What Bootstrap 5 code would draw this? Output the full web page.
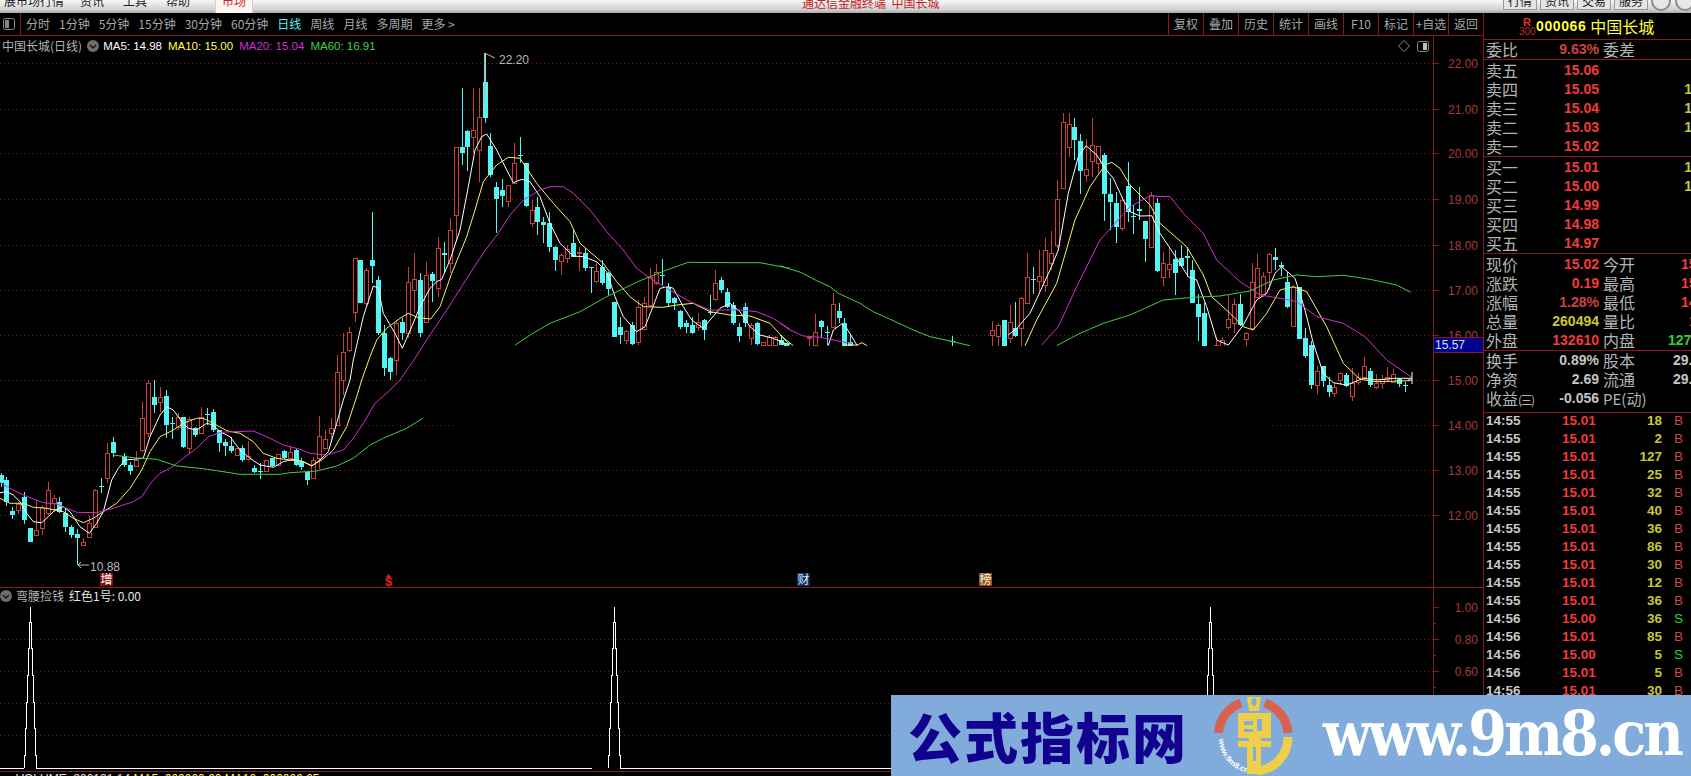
<!DOCTYPE html>
<html lang="zh-CN">
<head>
<meta charset="UTF-8">
<title>中国长城(日线)</title>
<link href="https://cdn.jsdelivr.net/npm/bootstrap@5.3.0/dist/css/bootstrap.min.css" rel="stylesheet">
<style>
html, body { background: #000; overflow: hidden; }
body { font-family: "Noto Sans CJK SC", "Liberation Sans", sans-serif; color: #b4b4b4; }
.tdx-app { width: 1691px; height: 776px; position: relative; overflow: hidden; background: #000; }
.tdx-title { height: 13px; background: linear-gradient(#f8f8f8, #d0d0d0 75%, #a8a8a8); color: #222; font-size: 12px; line-height: 14px; }
.tdx-menu { margin-bottom: 5px; white-space: nowrap; flex: none; }
.tdx-menu-item { margin-left: 19px; }
.tdx-menu-item:first-child { margin-left: 4px; margin-right: -5px; width: 62px; }
.tdx-tab { height: 13px; margin-left: 25px; width: 38px; flex: none; text-align: center; background: #fbf6f6; border: solid #e2c8c8; border-width: 0 1px; color: #d02020; overflow: hidden; }
.tdx-tab span { display: block; margin-top: -6px; line-height: 14px; }
.tdx-center { color: #c02020; margin-bottom: 3px; margin-left: 549px; width: 196px; flex: none; font-size: 12px; white-space: nowrap; }
.tdx-winbtn { width: 34px; height: 10px; flex: none; margin-right: 3px; border: 1px solid #9a9a9a; border-top: 0; background: #e4e4e4; font-size: 12px; line-height: 2px; text-align: center; overflow: hidden; }
.tdx-round { width: 20px; height: 20px; margin-top: -9px; margin-right: 4px; border: 2px solid #8c8c8c; border-radius: 50%; background: #e6e6e6; flex: none; }
.tdx-round-last { margin-right: -4px; }
.tdx-chartcol { width: 1483px; flex: none; }
.tdx-toolbar { height: 23px; border-bottom: 1px solid #8a1620; font-size: 12px; line-height: 21px; color: #a8a8a8; }
.tdx-tool-left { padding-left: 3px; gap: 9px; }
.tdx-tool-left .tdx-active { color: #54f0f0; }
.tdx-toggle { width: 18px; border-right: 1px solid #8a1620; margin-right: -4px; height: 22px; display: flex; align-items: center; }
.tdx-tool-cell { width: 35px; text-align: center; border-left: 1px solid #8a1620; white-space: nowrap; }
.tdx-plot { height: 740px; position: relative; }
.tdx-plot svg.tdx-canvas { position: absolute; left: 0; top: 0; }
.tdx-legend { position: absolute; left: 2px; top: 2px; font-size: 12px; line-height: 16px; gap: 6px; white-space: nowrap; }
.tdx-legend .tdx-ma { font: 11.5px/16px "Liberation Sans", sans-serif; }
.tdx-legend svg { margin-left: -1px; margin-right: -2px; }
.tdx-side { width: 208px; flex: none; border-left: 1px solid #8a1620; overflow: hidden; height: 763px; }
.tdx-stock { height: 27px; border-bottom: 1px solid #8a1620; color: #ffff40; }
.tdx-rmark { width: 16px; margin-left: 35px; margin-right: 1px; text-align: center; color: #e03030; font: bold 11px/10px "Liberation Sans", sans-serif; }
.tdx-rmark div { font-weight: normal; color: #c03030; font-size: 10px; }
.tdx-code { font: bold 14px/26px "Liberation Sans", sans-serif; letter-spacing: .6px; margin-right: 4px; }
.tdx-name { font-size: 16px; line-height: 26px; }
.tdx-sec { border-bottom: 1px solid #8a1620; overflow: hidden; }
.tdx-sec-pad { padding-top: 1px; }
.tdx-q { height: 19px; line-height: 19px; padding-left: 2px; font-size: 16px; white-space: nowrap; color: #b4b4b4; }
.tdx-q .tdx-l1 { width: 34px; flex: none; }
.tdx-q .tdx-v1 { width: 79px; flex: none; text-align: right; }
.tdx-q .tdx-l2 { width: 78px; flex: none; margin-left: 4px; }
.tdx-q .tdx-l2-num { width: 89px; }
.tdx-q .tdx-l2-in { width: 65px; }
.tdx-q .tdx-l2-cap { width: 70px; }
.tdx-q .tdx-l2-pe { font-size: 15px; }
.tdx-paren { font-size: 12px; letter-spacing: -1.5px; }
.tdx-num { font: bold 14px/19px "Liberation Sans", sans-serif; }
.tdx-red { color: #f23b3b; }
.tdx-dimred { color: #cf4242; }
.tdx-yel { color: #c8c832; }
.tdx-grn { color: #2fd02f; }
.tdx-gry { color: #c4c4c4; }
#trades { margin-top: -1px; }
.tdx-trade { height: 18px; padding-left: 2px; font: bold 13.5px/18px "Liberation Sans", sans-serif; white-space: nowrap; }
.tdx-trade .tdx-t { width: 76px; flex: none; color: #c8c8c8; }
.tdx-trade .tdx-p { width: 50px; flex: none; }
.tdx-trade .tdx-c { width: 50px; flex: none; text-align: right; }
.tdx-trade .tdx-f { margin-left: 12px; font-weight: normal; }
.tdx-banner { position: absolute; left: 891px; top: 695px; width: 800px; height: 81px; background: #80abda; }
.tdx-banner-cn { margin-left: 17px; width: 306px; flex: none; font-size: 54px; line-height: 60px; font-weight: 900; color: #12008e; letter-spacing: 2px; white-space: nowrap; }
.tdx-banner-url { margin-left: 29px; font-family: "DejaVu Serif Condensed", "DejaVu Serif", serif; font-weight: bold; font-size: 62px; line-height: 62px; letter-spacing: -3px; color: #fff; white-space: nowrap; margin-top: -4px; }
</style>
</head>
<body>
<div class="tdx-app d-flex flex-column">
    <div class="tdx-title d-flex overflow-hidden">
        <div class="tdx-menu d-flex align-self-end">
            <span class="tdx-menu-item">展市场行情</span>
            <span class="tdx-menu-item">资讯</span>
            <span class="tdx-menu-item">工具</span>
            <span class="tdx-menu-item">帮助</span>
        </div>
        <div class="tdx-tab"><span>市场</span></div>
        <div class="tdx-center align-self-end">通达信金融终端&nbsp;&nbsp;中国长城</div>
        <div class="d-flex ms-auto">
            <div class="tdx-winbtn">行情</div>
            <div class="tdx-winbtn">资讯</div>
            <div class="tdx-winbtn">交易</div>
            <div class="tdx-winbtn">服务</div>
            <div class="tdx-round"></div>
            <div class="tdx-round tdx-round-last"></div>
        </div>
    </div>

    <div class="d-flex">
        <div class="tdx-chartcol">
            <div class="tdx-toolbar d-flex">
                <div class="tdx-tool-left d-flex">
                    <div class="tdx-toggle">
                        <svg width="12" height="12"><rect x=".5" y=".5" width="11" height="11" rx="2" fill="none" stroke="#8a8a8a"/><rect x="2" y="2" width="4" height="8" fill="#8a8a8a"/></svg>
                    </div>
                    <span>分时</span><span>1分钟</span><span>5分钟</span><span>15分钟</span><span>30分钟</span><span>60分钟</span>
                    <span class="tdx-active">日线</span><span>周线</span><span>月线</span><span>多周期</span><span>更多 &gt;</span>
                </div>
                <div class="d-flex ms-auto">
                    <div class="tdx-tool-cell">复权</div>
                    <div class="tdx-tool-cell">叠加</div>
                    <div class="tdx-tool-cell">历史</div>
                    <div class="tdx-tool-cell">统计</div>
                    <div class="tdx-tool-cell">画线</div>
                    <div class="tdx-tool-cell">F10</div>
                    <div class="tdx-tool-cell">标记</div>
                    <div class="tdx-tool-cell">+自选</div>
                    <div class="tdx-tool-cell">返回</div>
                </div>
            </div>
            <div class="tdx-plot">
                <svg class="tdx-canvas" id="kline" width="1483" height="740" viewBox="0 36 1483 740"></svg>
                <div class="tdx-legend d-flex align-items-center">
                    <span>中国长城(日线)</span>
                    <svg width="12" height="12"><circle cx="6" cy="6" r="6" fill="#6e6e6e"/><path d="M3 5l3 3 3-3" fill="none" stroke="#111" stroke-width="1.3"/></svg>
                    <span class="tdx-ma" style="color:#fff">MA5: 14.98</span>
                    <span class="tdx-ma" style="color:#ffff50">MA10: 15.00</span>
                    <span class="tdx-ma" style="color:#d030d0">MA20: 15.04</span>
                    <span class="tdx-ma" style="color:#40d040">MA60: 16.91</span>
                </div>
            </div>
        </div>

        <div class="tdx-side">
            <div class="tdx-stock d-flex">
                <div class="tdx-rmark pt-1">R<div>300</div></div>
                <span class="tdx-code">000066</span>
                <span class="tdx-name">中国长城</span>
            </div>
            <div class="tdx-sec">
                <div class="tdx-q d-flex"><span class="tdx-l1">委比</span><span class="tdx-v1 tdx-num tdx-dimred">9.63%</span><span class="tdx-l2">委差</span></div>
            </div>
            <div class="tdx-sec tdx-sec-pad">
                <div class="tdx-q d-flex"><span class="tdx-l1">卖五</span><span class="tdx-v1 tdx-num tdx-red">15.06</span></div>
                <div class="tdx-q d-flex"><span class="tdx-l1">卖四</span><span class="tdx-v1 tdx-num tdx-red">15.05</span><span class="tdx-l2 tdx-l2-num tdx-num tdx-yel text-end">1</span></div>
                <div class="tdx-q d-flex"><span class="tdx-l1">卖三</span><span class="tdx-v1 tdx-num tdx-red">15.04</span><span class="tdx-l2 tdx-l2-num tdx-num tdx-yel text-end">1</span></div>
                <div class="tdx-q d-flex"><span class="tdx-l1">卖二</span><span class="tdx-v1 tdx-num tdx-red">15.03</span><span class="tdx-l2 tdx-l2-num tdx-num tdx-yel text-end">1</span></div>
                <div class="tdx-q d-flex"><span class="tdx-l1">卖一</span><span class="tdx-v1 tdx-num tdx-red">15.02</span></div>
            </div>
            <div class="tdx-sec tdx-sec-pad">
                <div class="tdx-q d-flex"><span class="tdx-l1">买一</span><span class="tdx-v1 tdx-num tdx-red">15.01</span><span class="tdx-l2 tdx-l2-num tdx-num tdx-yel text-end">1</span></div>
                <div class="tdx-q d-flex"><span class="tdx-l1">买二</span><span class="tdx-v1 tdx-num tdx-red">15.00</span><span class="tdx-l2 tdx-l2-num tdx-num tdx-yel text-end">1</span></div>
                <div class="tdx-q d-flex"><span class="tdx-l1">买三</span><span class="tdx-v1 tdx-num tdx-red">14.99</span></div>
                <div class="tdx-q d-flex"><span class="tdx-l1">买四</span><span class="tdx-v1 tdx-num tdx-red">14.98</span></div>
                <div class="tdx-q d-flex"><span class="tdx-l1">买五</span><span class="tdx-v1 tdx-num tdx-red">14.97</span></div>
            </div>
            <div class="tdx-sec tdx-sec-pad">
                <div class="tdx-q d-flex"><span class="tdx-l1">现价</span><span class="tdx-v1 tdx-num tdx-red">15.02</span><span class="tdx-l2">今开</span><span class="tdx-num tdx-red">15</span></div>
                <div class="tdx-q d-flex"><span class="tdx-l1">涨跌</span><span class="tdx-v1 tdx-num tdx-red">0.19</span><span class="tdx-l2">最高</span><span class="tdx-num tdx-red">15</span></div>
                <div class="tdx-q d-flex"><span class="tdx-l1">涨幅</span><span class="tdx-v1 tdx-num tdx-dimred">1.28%</span><span class="tdx-l2">最低</span><span class="tdx-num tdx-red">14</span></div>
                <div class="tdx-q d-flex"><span class="tdx-l1">总量</span><span class="tdx-v1 tdx-num tdx-yel">260494</span><span class="tdx-l2">量比</span><span class="tdx-num tdx-red ps-2">1</span></div>
                <div class="tdx-q d-flex"><span class="tdx-l1">外盘</span><span class="tdx-v1 tdx-num tdx-red">132610</span><span class="tdx-l2 tdx-l2-in">内盘</span><span class="tdx-num tdx-grn">127</span></div>
            </div>
            <div class="tdx-sec pb-1">
                <div class="tdx-q d-flex"><span class="tdx-l1">换手</span><span class="tdx-v1 tdx-num tdx-gry">0.89%</span><span class="tdx-l2 tdx-l2-cap">股本</span><span class="tdx-num tdx-gry">29.</span></div>
                <div class="tdx-q d-flex"><span class="tdx-l1">净资</span><span class="tdx-v1 tdx-num tdx-gry">2.69</span><span class="tdx-l2 tdx-l2-cap">流通</span><span class="tdx-num tdx-gry">29.</span></div>
                <div class="tdx-q d-flex"><span class="tdx-l1">收益<span class="tdx-paren">(三)</span></span><span class="tdx-v1 tdx-num tdx-gry">-0.056</span><span class="tdx-l2 tdx-l2-pe">PE(动)</span></div>
            </div>
            <div id="trades"></div>
        </div>
    </div>

    <div class="tdx-banner d-flex align-items-center">
        <div class="tdx-banner-cn">公式指标网</div>
        <svg width="80" height="81" viewBox="0 0 80 81" class="flex-shrink-0">
            <defs><path id="logoArc" d="M5 44 A35 35 0 0 0 36 78"/></defs>
            <path d="M4.5 38 A34 34 0 0 1 27 8" fill="none" stroke="#d9614f" stroke-width="9"/>
            <path d="M51 8 A34 34 0 0 1 74 38" fill="none" stroke="#d9614f" stroke-width="9"/>
            <path d="M74 42 A34 34 0 0 1 44 76" fill="none" stroke="#efcf4a" stroke-width="9"/>
            <text font-size="8" font-weight="bold" fill="#fff" font-family="Liberation Sans, sans-serif"><textPath href="#logoArc">www.9m8.cn</textPath></text>
            <path d="M33 2h14l-2 14h-10z" fill="#efcf4a"/>
            <ellipse cx="40" cy="7" rx="2.5" ry="4" fill="#80abda"/>
            <path d="M24 18h33v34h-10v27h-14v-27h-9z" fill="#efcf4a"/>
            <path d="M30 26h9v4h-9zM43 24h5v12h-5zM30 34h9v3h-9zM24 43h11v3h-11zM47 43h10v3h-10zM39 52h3v14h-3z" fill="#80abda"/>
        </svg>
        <div class="tdx-banner-url">www.9m8.cn</div>
    </div>
</div>

<script src="https://cdn.jsdelivr.net/npm/bootstrap@5.3.0/dist/js/bootstrap.bundle.min.js"></script>
<script>
// traced from the chart, in crop pixels: x, bodyTop, bodyBottom, wickTop, wickBottom, colour
const candleCrops = [[0,380,[
[2,285,310,280,320,'c'],[19,300,365,290,378,'c'],[37,392,404,380,416,'c'],[55,372,390,365,403,'r'],[73,350,420,335,432,'c'],
[91,443,485,443,485,'c'],[109,450,465,360,465,'r'],[127,380,445,375,465,'r'],[145,330,400,307,405,'r'],[163,355,370,345,395,'r'],
[178,365,395,350,400,'c'],[196,400,440,385,455,'c'],[214,440,465,435,475,'c'],[232,462,475,448,555,'c'],[250,485,494,475,494,'r'],
[268,428,472,408,475,'r'],[286,330,440,328,440,'r'],[304,318,322,295,340,'c'],[322,220,295,190,310,'r'],[340,185,220,170,230,'c'],
[373,228,255,220,260,'c'],[391,255,272,245,285,'c'],[409,240,258,212,262,'r'],[427,115,210,65,215,'r'],[445,10,160,0,170,'r'],
[463,50,75,0,100,'c'],[481,50,65,22,95,'r'],[499,48,135,30,175,'c'],[517,130,132,110,178,'c'],[535,110,140,100,150,'r'],
[550,112,200,112,205,'c'],[568,118,205,112,220,'r'],[586,145,165,140,170,'c'],[604,110,160,82,162,'r'],[622,103,105,85,135,'c'],
[640,97,150,88,155,'c'],[658,150,190,150,215,'c'],[676,185,198,178,228,'c'],[694,198,212,170,218,'c'],[710,203,225,203,225,'r'],
[727,205,240,195,245,'c'],[745,228,238,183,240,'r'],[763,265,275,255,280,'c'],[781,272,273,248,298,'c'],[799,240,273,240,273,'r'],
[817,233,258,233,262,'c'],[835,222,255,222,258,'r'],[853,212,235,210,238,'c'],[871,215,235,198,238,'r'],[889,210,255,208,258,'c'],
[904,245,260,235,270,'c'],[922,275,300,272,315,'c'],[940,240,295,232,298,'r'],[958,168,235,108,268,'r'],[976,178,205,150,205,'r'],
[994,145,160,115,190,'r']]],
[340,40,[
[28,875,930,860,935,'r'],[46,655,815,655,845,'r'],[61,660,790,660,790,'c'],[79,690,790,685,800,'r'],
[97,660,678,515,730,'c'],[115,720,880,708,885,'c'],[187,845,880,835,900,'c'],[205,725,880,680,895,'r'],[223,718,750,640,820,'r'],
[239,720,880,700,890,'c'],[257,705,845,665,850,'r'],
[275,702,722,695,785,'c'],[293,625,745,590,770,'r'],[311,640,645,605,700,'c'],[329,570,670,535,700,'r'],[347,322,525,322,600,'r'],
[365,322,340,145,375,'c'],[382,272,320,270,392,'c'],[400,270,290,145,340,'r'],[416,230,330,145,425,'r'],[434,125,235,42,250,'c'],
[451,318,405,280,410,'c'],[469,440,478,425,580,'c'],[487,450,468,418,500,'c'],[505,435,482,435,500,'r'],[523,370,430,310,430,'r'],
[541,345,348,290,368,'c'],[559,370,498,370,500,'c'],[577,510,550,480,560,'r'],[592,502,545,472,585,'c'],[610,545,555,530,610,'c'],
[628,548,620,515,635,'c'],[646,620,660,618,692,'c'],[664,645,662,640,705,'r'],[682,628,655,615,668,'r'],[700,610,650,570,650,'c'],
[718,635,640,620,692,'r'],[736,640,684,625,692,'c'],[754,680,682,680,758,'c'],[769,692,722,665,728,'r'],[787,682,728,660,735,'c'],
[805,700,748,695,765,'c'],[823,785,890,785,892,'c'],[841,860,885,830,912,'c'],[859,872,900,870,912,'r'],[877,855,912,845,915,'c'],
[895,800,905,780,915,'r'],[913,790,868,770,870,'r'],[931,710,795,685,800,'r'],[947,695,730,672,735,'r'],[965,705,708,658,735,'c'],
[983,740,790,728,800,'c'],[1001,775,790,770,810,'c'],[1019,812,860,810,868,'c'],[1037,848,860,840,878,'c'],[1055,855,878,830,882,'c'],
[1073,845,860,820,872,'r'],[1091,840,870,838,900,'c'],[1109,815,818,765,825,'c'],[1124,730,778,690,782,'r'],[1142,720,750,710,760,'c'],
[1160,755,800,745,805,'c'],[1178,795,848,785,855,'c'],[1196,862,888,848,905,'c'],[1214,800,848,790,860,'c'],[1232,855,895,850,915,'r'],
[1250,848,912,845,915,'c'],[1268,905,916,905,916,'r'],[1286,890,916,885,916,'r'],[1304,890,916,888,916,'r'],[1322,900,916,885,916,'c'],[1340,910,916,905,916,'c']]],
[780,250,[
[17,280,287,280,287,'c'],[87,262,264,258,287,'r'],[105,245,285,192,287,'r'],[124,213,232,210,262,'c'],[141,245,247,228,285,'c'],
[159,163,232,130,235,'r'],[176,183,205,158,220,'c'],[193,220,287,205,287,'c'],[211,275,287,255,287,'c'],[515,272,274,258,287,'c'],
[637,240,252,212,287,'r'],[655,225,255,222,287,'r']]],
[980,90,[
[37,720,735,695,767,'r'],[55,705,738,700,767,'r'],[73,690,767,690,767,'c'],[91,697,745,645,760,'r'],[106,715,738,635,740,'c'],
[124,625,715,622,767,'r'],[142,562,638,490,640,'r'],[160,567,570,530,612,'c'],[178,558,572,480,605,'r'],[196,480,585,445,605,'r'],
[214,490,520,422,540,'r'],[232,328,465,270,475,'r'],[250,97,295,70,297,'r'],[268,102,170,68,200,'r'],[283,112,150,85,210,'c'],
[301,153,242,132,312,'c'],[319,238,255,147,275,'r'],[337,165,212,85,260,'r'],[355,168,218,168,250,'r'],[373,195,312,188,392,'c'],
[391,312,335,265,420,'c'],[409,338,410,305,458,'c'],[427,330,415,320,422,'r'],[445,288,365,215,395,'c'],[460,378,382,345,432,'c'],
[478,358,362,292,390,'c'],[496,393,448,393,515,'c'],[514,315,472,305,475,'r'],[532,340,542,325,545,'c'],[550,518,560,485,588,'r'],
[568,522,538,470,565,'r'],[586,508,550,480,615,'c'],[604,505,528,465,530,'c'],[622,497,505,470,560,'c'],[637,540,638,510,640,'c'],
[655,642,680,612,752,'c'],[673,668,767,640,767,'c'],[709,765,767,740,767,'r'],[727,750,767,740,767,'r'],[745,688,710,615,720,'r'],
[763,642,700,625,730,'r'],[781,642,706,612,708,'c'],[799,730,748,725,767,'r'],[817,575,715,518,720,'r'],[832,535,620,492,622,'r'],
[850,558,612,545,622,'r'],[868,492,545,490,600,'r'],[886,502,510,475,540,'c'],[904,525,532,515,558,'c'],[922,575,650,545,655,'c'],
[940,590,707,585,708,'r'],[958,592,746,590,748,'c'],[976,745,798,715,805,'c'],[994,765,885,752,898,'c'],[1010,843,885,828,912,'r'],
[1028,828,872,828,890,'c'],[1046,885,905,860,920,'c'],[1063,892,910,880,922,'r'],[1081,850,870,845,885,'r'],[1099,855,888,850,890,'c'],
[1117,880,918,835,932,'r'],[1135,862,875,850,885,'r'],[1153,828,862,800,865,'r'],[1171,842,885,835,890,'c'],[1187,880,890,852,898,'r'],
[1205,868,878,855,898,'r'],[1222,860,868,832,875,'r'],[1240,852,875,838,878,'r'],[1258,867,882,865,892,'c'],[1276,885,889,875,905,'c']]],
// the bars that fall between the two crops above (page pixels x3)
[0,0,[
[1011,1116,1275,1065,1275,'r'],[1029,1056,1140,999,1185,'r'],[1152,999,1104,975,1128,'c'],[1170,1074,1116,1071,1140,'c'],[1188,969,1080,960,1125,'r']]]];

// moving averages, same crop pixels; join: first two parts of the line are continuous
const maLines = [
{color:'#ffffff', join:true, parts:[
 [0,380,[[0,338],[20,335],[40,345],[60,365],[80,400],[100,425],[125,428],[145,410],[165,390],[190,380],[210,395],[240,440],[268,460],[290,430],[310,395],[335,300],[355,265],[375,240],[400,238],[430,235],[450,170],[480,105],[500,80],[520,90],[545,125],[565,145],[590,150],[620,130],[640,135],[660,155],[690,170],[720,210],[750,235],[780,255],[820,262],[850,245],[880,238],[910,245],[935,258],[960,240],[985,215],[1010,130],[1030,60],[1050,0]]],
 [340,40,[[40,960],[70,830],[100,738],[115,745],[130,820],[165,880],[187,925],[215,860],[240,800],[270,745],[290,725],[305,718],[330,660],[360,570],[385,440],[405,330],[425,290],[440,282],[470,330],[500,390],[520,428],[545,418],[570,425],[600,470],[630,550],[660,610],[700,648],[730,650],[770,665],[800,695],[825,770],[850,830],[890,875],[915,860],[935,810],[960,745],[985,740],[1000,745],[1030,800],[1055,840],[1090,865],[1110,840],[1140,805],[1170,790],[1200,815],[1230,860],[1260,885],[1300,895],[1340,912]]],
 [780,250,[[145,287],[160,240],[185,222],[200,235],[232,287]]],
 [980,90,[[85,735],[110,715],[150,670],[180,605],[210,540],[235,480],[265,310],[295,200],[318,167],[350,195],[375,235],[400,265],[430,330],[450,365],[480,378],[515,377],[540,430],[590,505],[625,560],[650,570],[680,650],[710,750],[745,765],[790,705],[830,630],[860,610],[885,550],[905,530],[945,565],[975,660],[1000,760],[1030,850],[1060,878],[1100,885],[1150,865],[1190,870],[1240,865],[1295,865]]]
]},
{color:'#f4f468', join:true, parts:[
 [0,380,[[0,355],[30,370],[70,370],[100,382],[140,385],[190,395],[220,415],[250,428],[280,415],[310,395],[350,370],[390,325],[425,270],[450,215],[480,170],[520,150],[550,130],[590,115],[610,115],[640,130],[680,152],[720,160],[760,185],[790,220],[830,235],[870,240],[910,245],[935,257],[965,240],[1000,210],[1040,140],[1070,50],[1085,0]]],
 [340,40,[[90,950],[110,900],[140,865],[180,835],[205,820],[235,833],[272,837],[300,800],[335,700],[380,590],[405,510],[430,425],[470,375],[505,352],[540,355],[590,430],[640,490],[690,545],[720,610],[790,670],[830,725],[870,770],[910,800],[970,802],[1010,795],[1060,790],[1110,815],[1170,825],[1230,828],[1290,850],[1340,905]]],
 [780,250,[[0,255],[40,287]]],
 [780,250,[[190,285],[232,285],[245,278],[262,287]]],
 [980,90,[[135,767],[170,690],[230,580],[285,390],[330,290],[375,225],[395,217],[420,235],[450,285],[510,345],[540,400],[620,470],[670,555],[695,620],[750,670],[790,710],[820,720],[860,670],[900,600],[940,590],[980,605],[1040,710],[1090,820],[1140,868],[1190,875],[1290,872]]]
]},
{color:'#d030d0', join:true, parts:[
 [0,380,[[0,308],[30,325],[70,345],[130,368],[170,372],[200,385],[230,397],[290,398],[340,385],[400,365],[425,350],[455,305],[480,280],[510,265],[550,235],[590,205],[625,170],[660,157],[700,155],[760,153],[800,170],[850,195],[900,208],[930,220],[980,225],[1030,210],[1060,175],[1090,130],[1125,70],[1165,35],[1200,0]]],
 [340,40,[[225,955],[260,900],[320,810],[400,685],[440,625],[475,580],[510,525],[550,480],[600,450],[630,440],[670,440],[700,460],[750,510],[800,575],[850,630],[890,685],[930,715],[980,745],[1050,785],[1110,810],[1200,810],[1250,815],[1300,835],[1350,868]]],
 [780,250,[[0,220],[30,240],[70,258],[120,262],[170,272],[215,280]]],
 [980,90,[[185,765],[235,710],[290,590],[360,450],[450,350],[510,318],[570,320],[610,370],[670,430],[710,510],[780,575],[840,615],[900,625],[950,635],[1010,680],[1090,700],[1155,740],[1220,810],[1295,862]]]
]},
{color:'#40d040', join:false, parts:[
 [0,380,[[340,225],[400,233],[470,238],[530,258],[600,265],[650,272],[720,283],[840,283],[870,278],[950,273],[1010,258],[1060,235],[1110,195],[1150,175],[1220,145],[1268,115]]],
 [340,40,[[525,916],[570,885],[630,850],[720,815],[800,770],[900,722],[980,690],[1045,667],[1180,668],[1260,668],[1350,685]]],
 [780,250,[[0,47],[65,68],[110,92],[150,110],[175,130],[240,160],[280,185],[340,212],[400,240],[450,260],[510,273],[570,287]]],
 [980,90,[[230,767],[300,730],[370,700],[450,675],[550,630],[640,622],[720,618],[810,603],[880,570],[950,555],[1010,560],[1090,556],[1170,568],[1250,585],[1292,607]]]
]}];

let out = '';
const dotted = (y, x1, x2) => `<line x1="${x1}" x2="${x2}" y1="${y}" y2="${y}" stroke="#6e2020" stroke-dasharray="1 3"/>`;
const axisText = (y, t) => `<text x="1478" y="${y + 4}" text-anchor="end" font-family="Liberation Sans, sans-serif" font-size="12" fill="#a83a3a">${t}</text>`;
const tick = (y, len) => `<line x1="1433" x2="${1433 + len}" y1="${y}" y2="${y}" stroke="#8a1620"/>`;

// grid + price axis
[['22.00',63.5],['21.00',109.5],['20.00',153.5],['19.00',199.5],['18.00',245.5],['17.00',290.5],['16.00',335.5],['15.00',380.5],['14.00',425.5],['13.00',470.5],['12.00',515.5]].forEach(([t, y]) => {
    out += dotted(y, 0, 1433) + tick(y, 6) + axisText(y, t);
});
[['1.00',607.5],['0.80',639.5],['0.60',671.5]].forEach(([t, y]) => {
    if (y > 610) out += dotted(y, 0, 1433);
    out += tick(y, 6) + tick(y + 16, 3) + axisText(y, t);
});
out += dotted(703.5, 0, 1433) + dotted(735.5, 0, 1433);

// candles
let g = '';
candleCrops.forEach(([ox, oy, rows]) => rows.forEach(([x, bt, bb, wt, wb, c]) => {
    const px = Math.round(ox + x / 3) + .5;
    const top = Math.round(oy + bt / 3), bot = Math.round(oy + bb / 3);
    const hi = Math.round(oy + wt / 3), lo = Math.round(oy + wb / 3);
    const col = c === 'r' ? '#c8403a' : '#54f4f4';
    g += `<line x1="${px}" x2="${px}" y1="${hi}" y2="${top}" stroke="${col}"/><line x1="${px}" x2="${px}" y1="${bot}" y2="${lo}" stroke="${col}"/>`;
    if (c === 'r') {
        g += `<rect x="${px - 2}" y="${top + .5}" width="4" height="${Math.max(bot - top, 1)}" fill="#000" stroke="${col}"/>`;
    } else {
        g += `<rect x="${px - 2.5}" y="${top}" width="5" height="${Math.max(bot - top, 1)}" fill="${col}"/>`;
    }
}));
out += `<g shape-rendering="crispEdges">${g}</g>`;

// moving average lines
const toPts = ([ox, oy, pts]) => pts.map(([x, y]) => (ox + x / 3).toFixed(1) + ',' + (oy + y / 3).toFixed(1));
maLines.forEach(ma => {
    const runs = ma.join
        ? [toPts(ma.parts[0]).concat(toPts(ma.parts[1]))].concat(ma.parts.slice(2).map(toPts))
        : ma.parts.map(toPts);
    runs.forEach(r => { out += `<polyline points="${r.join(' ')}" fill="none" stroke="${ma.color}"/>`; });
});

// blacked-out block in the middle of the chart
out += '<path d="M425 346H1300V400H1270V445H455V400H425z" fill="#000"/>';
out += `<line x1="1412" x2="1412" y1="372" y2="384" stroke="#fff"/><line x1="1408" x2="1412" y1="380" y2="380" stroke="#fff"/>`;

// hi/lo marks
out += '<polyline points="484.5,100 484.5,53 495,58" fill="none" stroke="#b8b8b8"/><text x="499" y="64" font-family="Liberation Sans, sans-serif" font-size="12" fill="#b8b8b8">22.20</text>';
out += '<polyline points="89,565 78,565 81,562 78,565 81,568" fill="none" stroke="#b8b8b8"/><text x="90" y="571" font-family="Liberation Sans, sans-serif" font-size="12" fill="#b8b8b8">10.88</text>';

// top right icons of the plot
out += '<path d="M1404 40.5l5.5 5.5-5.5 5.5-5.5-5.5z" fill="none" stroke="#8a8a8a"/>';
out += '<rect x="1417.5" y="41.5" width="11" height="10" rx="2" fill="none" stroke="#8a8a8a"/><rect x="1423" y="43" width="4" height="7" fill="#bdbdbd"/>';

// event markers
const marker = (x, bg, col, t) => `<rect x="${x}" y="573" width="13" height="13" fill="${bg}"/><text x="${x + .5}" y="584" font-size="12" fill="${col}" font-family="Noto Sans CJK SC, sans-serif">${t}</text>`;
out += marker(100, '#8b1010', '#fff', '增') + marker(797, '#10305a', '#d8e8ff', '财') + marker(979, '#8a5a20', '#fff0d0', '榜');
out += '<text x="385" y="586" font-size="13" font-weight="bold" fill="#e02020" font-family="Liberation Sans, sans-serif">$</text><path d="M388.5 574l2.5 3h-5z" fill="#e02020"/>';

// frame lines
out += '<g stroke="#8a1620" shape-rendering="crispEdges"><line x1="1433.5" x2="1433.5" y1="36" y2="776"/><line x1="0" x2="1483" y1="587.5" y2="587.5"/><line x1="0" x2="1433" y1="771.5" y2="771.5"/></g>';

// lower pane: legend + spikes
out += '<circle cx="6" cy="596" r="6" fill="#6e6e6e"/><path d="M3 595l3 3 3-3" fill="none" stroke="#111" stroke-width="1.3"/>';
out += '<text x="16" y="601" font-size="12" fill="#b4b4b4" font-family="Noto Sans CJK SC, sans-serif">弯腰捡钱</text>';
out += '<text x="69" y="601" font-size="12" fill="#e4e4e4" font-family="Noto Sans CJK SC, sans-serif">红色1号: 0.00</text>';
const ys = [768, 755, 728, 702, 675, 648, 622, 607];
let spike = 'M0 768.5';
[30, 614, 1210].forEach(cx => {
    const half = [6, 5, 4, 3, 2, 1, 0];
    half.forEach((h, i) => { spike += `L${cx - h} ${ys[i]}L${cx - h} ${ys[i + 1]}`; });
    half.slice().reverse().forEach((h, i) => { spike += `L${cx + h} ${ys[7 - i]}L${cx + h} ${ys[6 - i]}`; });
    spike += `L${cx + 6} 768.5`;
});
spike += 'L1433 768.5';
out += `<path d="${spike}" fill="none" stroke="#fff" shape-rendering="crispEdges"/>`;

// bottom legend, only the top of it shows
out += '<text x="16" y="783" font-size="12" fill="#e4e4e4" font-family="Liberation Sans, sans-serif">VOLUME: 200121.14 <tspan fill="#ffff50">MA5: 000000.00 MA10: 000000.05</tspan></text>';

document.getElementById('kline').innerHTML = out +
    '<rect x="1433.5" y="337.5" width="50" height="15" fill="#00008b" stroke="#8a1620"/>' +
    '<text x="1435" y="349" font-size="12" fill="#cfe0ff" font-family="Liberation Sans, sans-serif">15.57</text>';

// tick list on the right
const tradeRows = [
    ['14:55','15.01',18,'B'],['14:55','15.01',2,'B'],['14:55','15.01',127,'B'],['14:55','15.01',25,'B'],
    ['14:55','15.01',32,'B'],['14:55','15.01',40,'B'],['14:55','15.01',36,'B'],['14:55','15.01',86,'B'],
    ['14:55','15.01',30,'B'],['14:55','15.01',12,'B'],['14:55','15.01',36,'B'],['14:56','15.00',36,'S'],
    ['14:56','15.01',85,'B'],['14:56','15.00',5,'S'],['14:56','15.01',5,'B'],['14:56','15.01',30,'B']
];
const trades = document.getElementById('trades');
tradeRows.forEach(([t, p, c, f]) => {
    trades.innerHTML += `<div class="tdx-trade d-flex"><span class="tdx-t">${t}</span><span class="tdx-p tdx-red">${p}</span>` +
        `<span class="tdx-c tdx-yel">${c}</span><span class="tdx-f ${f === 'B' ? 'tdx-dimred' : 'tdx-grn'}">${f}</span></div>`;
});
</script>
</body>
</html>
